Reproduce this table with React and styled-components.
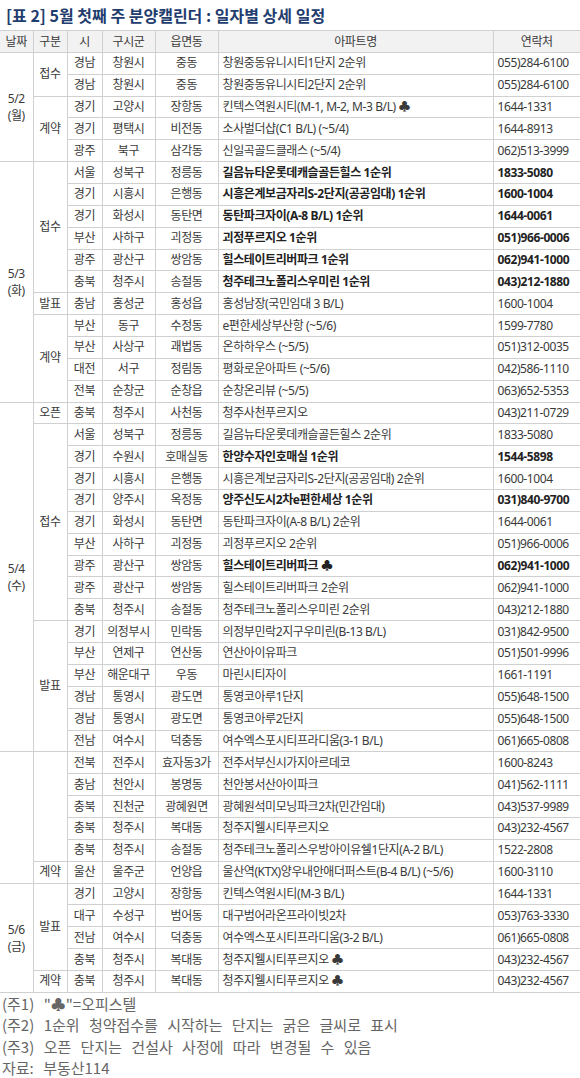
import React from 'react';
import styled, { createGlobalStyle } from 'styled-components';

const GlobalStyle = createGlobalStyle`
  body {
    margin: 0;
    background: #fff;
    font-family: "Noto Sans", "Noto Sans CJK KR", sans-serif;
  }
`;

const Page = styled.div`
  width: 580px;
`;

const Title = styled.h2`
  margin: 0;
  height: 30px;
  padding-left: 6px;
  font-family: "Noto Sans CJK KR", sans-serif;
  font-size: 16px;
  font-weight: 700;
  line-height: 30px;
  color: #1f3d6e;
`;

const Table = styled.table`
  width: 580px;
  border-collapse: collapse;
  table-layout: fixed;
  font-size: 12px;
  letter-spacing: -0.4px;
  color: #3a3a3a;
`;

const Row = styled.tr`
  height: 21.86px;
`;

const Th = styled.th`
  font-weight: 400;
  background: #f2f2f2;
  border: 1px solid #d0d0d0;
  padding: 0;
  text-align: center;
  &:first-child { border-left: none; }
  &:last-child { border-right: none; }
`;

const Td = styled.td`
  border: 1px solid #d0d0d0;
  padding: 0 ${(p) => (p.$left ? '4px' : '0')};
  text-align: ${(p) => (p.$left ? 'left' : 'center')};
  white-space: nowrap;
  line-height: 14px;
  font-weight: ${(p) => (p.$bold ? 700 : 400)};
  color: ${(p) => (p.$bold ? '#222' : '#3a3a3a')};
  &:last-child { border-right: none; }
`;

const DateCell = styled(Td)`
  border-left: none;
  line-height: 17px;
  white-space: normal;
`;

const Notes = styled.div`
  padding-left: 2px;
  font-family: "Noto Sans CJK KR", sans-serif;
  font-size: 15px;
  line-height: 21.5px;
  word-spacing: 6px;
  color: #666;
`;

// [시, 구시군, 읍면동, 아파트명, 연락처, 굵게]
const blocks = [
  {
    date: ['5/2', '(월)'],
    sections: [
      { kind: '접수', rows: [
        ['경남', '창원시', '중동', '창원중동유니시티1단지 2순위', '055)284-6100'],
        ['경남', '창원시', '중동', '창원중동유니시티2단지 2순위', '055)284-6100'],
      ] },
      { kind: '계약', rows: [
        ['경기', '고양시', '장항동', '킨텍스역원시티(M-1, M-2, M-3 B/L) ♣', '1644-1331'],
        ['경기', '평택시', '비전동', '소사벌더샵(C1 B/L) (~5/4)', '1644-8913'],
        ['광주', '북구', '삼각동', '신일곡골드클래스 (~5/4)', '062)513-3999'],
      ] },
    ],
  },
  {
    date: ['5/3', '(화)'],
    sections: [
      { kind: '접수', rows: [
        ['서울', '성북구', '정릉동', '길음뉴타운롯데캐슬골든힐스 1순위', '1833-5080', true],
        ['경기', '시흥시', '은행동', '시흥은계보금자리S-2단지(공공임대) 1순위', '1600-1004', true],
        ['경기', '화성시', '동탄면', '동탄파크자이(A-8 B/L) 1순위', '1644-0061', true],
        ['부산', '사하구', '괴정동', '괴정푸르지오 1순위', '051)966-0006', true],
        ['광주', '광산구', '쌍암동', '힐스테이트리버파크 1순위', '062)941-1000', true],
        ['충북', '청주시', '송절동', '청주테크노폴리스우미린 1순위', '043)212-1880', true],
      ] },
      { kind: '발표', rows: [
        ['충남', '홍성군', '홍성읍', '홍성남장(국민임대 3 B/L)', '1600-1004'],
      ] },
      { kind: '계약', rows: [
        ['부산', '동구', '수정동', 'e편한세상부산항 (~5/6)', '1599-7780'],
        ['부산', '사상구', '괘법동', '온하하우스 (~5/5)', '051)312-0035'],
        ['대전', '서구', '정림동', '평화로운아파트 (~5/6)', '042)586-1110'],
        ['전북', '순창군', '순창읍', '순창온리뷰 (~5/5)', '063)652-5353'],
      ] },
    ],
  },
  {
    date: ['5/4', '(수)'],
    sections: [
      { kind: '오픈', rows: [
        ['충북', '청주시', '사천동', '청주사천푸르지오', '043)211-0729'],
      ] },
      { kind: '접수', rows: [
        ['서울', '성북구', '정릉동', '길음뉴타운롯데캐슬골든힐스 2순위', '1833-5080'],
        ['경기', '수원시', '호매실동', '한양수자인호매실 1순위', '1544-5898', true],
        ['경기', '시흥시', '은행동', '시흥은계보금자리S-2단지(공공임대) 2순위', '1600-1004'],
        ['경기', '양주시', '옥정동', '양주신도시2차e편한세상 1순위', '031)840-9700', true],
        ['경기', '화성시', '동탄면', '동탄파크자이(A-8 B/L) 2순위', '1644-0061'],
        ['부산', '사하구', '괴정동', '괴정푸르지오 2순위', '051)966-0006'],
        ['광주', '광산구', '쌍암동', '힐스테이트리버파크 ♣', '062)941-1000', true],
        ['광주', '광산구', '쌍암동', '힐스테이트리버파크 2순위', '062)941-1000'],
        ['충북', '청주시', '송절동', '청주테크노폴리스우미린 2순위', '043)212-1880'],
      ] },
      { kind: '발표', rows: [
        ['경기', '의정부시', '민락동', '의정부민락2지구우미린(B-13 B/L)', '031)842-9500'],
        ['부산', '연제구', '연산동', '연산아이유파크', '051)501-9996'],
        ['부산', '해운대구', '우동', '마린시티자이', '1661-1191'],
        ['경남', '통영시', '광도면', '통영코아루1단지', '055)648-1500'],
        ['경남', '통영시', '광도면', '통영코아루2단지', '055)648-1500'],
        ['전남', '여수시', '덕충동', '여수엑스포시티프라디움(3-1 B/L)', '061)665-0808'],
      ] },
    ],
  },
  {
    date: [],
    sections: [
      { kind: '', rows: [
        ['전북', '전주시', '효자동3가', '전주서부신시가지아르데코', '1600-8243'],
        ['충남', '천안시', '봉명동', '천안봉서산아이파크', '041)562-1111'],
        ['충북', '진천군', '광혜원면', '광혜원석미모닝파크2차(민간임대)', '043)537-9989'],
        ['충북', '청주시', '복대동', '청주지웰시티푸르지오', '043)232-4567'],
        ['충북', '청주시', '송절동', '청주테크노폴리스우방아이유쉘1단지(A-2 B/L)', '1522-2808'],
      ] },
      { kind: '계약', rows: [
        ['울산', '울주군', '언양읍', '울산역(KTX)양우내안애더퍼스트(B-4 B/L) (~5/6)', '1600-3110'],
      ] },
    ],
  },
  {
    date: ['5/6', '(금)'],
    sections: [
      { kind: '발표', rows: [
        ['경기', '고양시', '장항동', '킨텍스역원시티(M-3 B/L)', '1644-1331'],
        ['대구', '수성구', '범어동', '대구범어라온프라이빗2차', '053)763-3330'],
        ['전남', '여수시', '덕충동', '여수엑스포시티프라디움(3-2 B/L)', '061)665-0808'],
        ['충북', '청주시', '복대동', '청주지웰시티푸르지오 ♣', '043)232-4567'],
      ] },
      { kind: '계약', rows: [
        ['충북', '청주시', '복대동', '청주지웰시티푸르지오 ♣', '043)232-4567'],
      ] },
    ],
  },
];

const headers = ['날짜', '구분', '시', '구시군', '읍면동', '아파트명', '연락처'];
const widths = [33, 34, 35, 53, 63, 275, 87];

function BlockRows({ block }) {
  const total = block.sections.reduce((n, s) => n + s.rows.length, 0);
  return block.sections.map((section, si) =>
    section.rows.map((r, ri) => (
      <Row key={`${si}-${ri}`}>
        {si === 0 && ri === 0 && (
          <DateCell rowSpan={total}>
            {block.date[0]}
            {block.date[1] && <br />}
            {block.date[1]}
          </DateCell>
        )}
        {ri === 0 && <Td rowSpan={section.rows.length}>{section.kind}</Td>}
        <Td>{r[0]}</Td>
        <Td>{r[1]}</Td>
        <Td>{r[2]}</Td>
        <Td $left $bold={r[5]}>{r[3]}</Td>
        <Td $left $bold={r[5]}>{r[4]}</Td>
      </Row>
    ))
  );
}

export default function App() {
  return (
    <Page>
      <GlobalStyle />
      <Title>[표 2] 5월 첫째 주 분양캘린더 : 일자별 상세 일정</Title>
      <Table>
        <colgroup>
          {widths.map((w, i) => <col key={i} style={{ width: w }} />)}
        </colgroup>
        <thead>
          <Row>
            {headers.map((h) => <Th key={h}>{h}</Th>)}
          </Row>
        </thead>
        <tbody>
          {blocks.map((b, i) => <BlockRows key={i} block={b} />)}
        </tbody>
      </Table>
      <Notes>
        <div>(주1) "♣"=오피스텔</div>
        <div>(주2) 1순위 청약접수를 시작하는 단지는 굵은 글씨로 표시</div>
        <div>(주3) 오픈 단지는 건설사 사정에 따라 변경될 수 있음</div>
        <div>자료: 부동산114</div>
      </Notes>
    </Page>
  );
}
